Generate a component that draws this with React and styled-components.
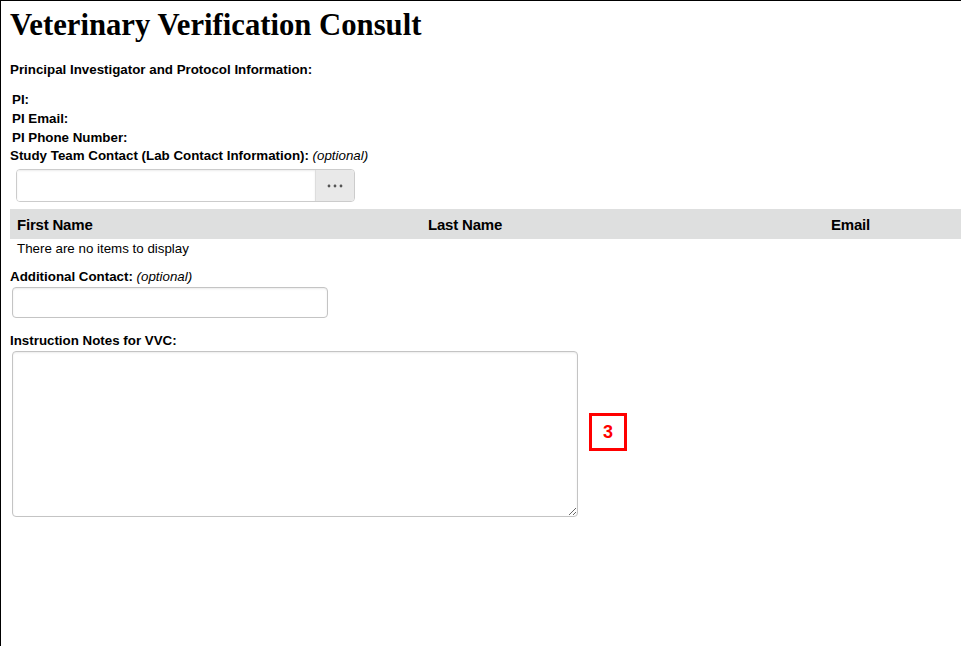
import React from "react";
import styled, { createGlobalStyle } from "styled-components";

const Global = createGlobalStyle`
  html, body {
    margin: 0;
    padding: 0;
    background: #fff;
    overflow: hidden;
  }
  body {
    font-family: "Liberation Sans", Arial, sans-serif;
    color: #000;
  }
`;

const Frame = styled.div`
  border-top: 1px solid #000;
  border-left: 1px solid #000;
  width: 1000px;
  height: 700px;
  padding-left: 9px;
  box-sizing: border-box;
`;

const Title = styled.h1`
  font-family: "Liberation Serif", "Times New Roman", serif;
  font-size: 30.7px;
  font-weight: bold;
  margin: 7px 0 0 0;
  line-height: 34px;
`;

const SectionLabel = styled.div`
  font-size: 13.33px;
  font-weight: bold;
  line-height: 15px;
  margin-top: ${(p) => p.$top || 0}px;
`;

const Optional = styled.span`
  font-weight: normal;
  font-style: italic;
`;

const InfoList = styled.div`
  display: flex;
  flex-direction: column;
  padding-left: 2px;
  margin-top: 15px;
  gap: 4px;
`;

const InfoRow = styled.div`
  font-size: 13.33px;
  font-weight: bold;
  line-height: 15px;
`;

const Lookup = styled.div`
  display: flex;
  width: 339px;
  height: 33px;
  margin: 6px 0 0 6px;
  border: 1px solid #ccc;
  border-radius: 4px;
  box-sizing: border-box;
  overflow: hidden;
`;

const LookupInput = styled.input`
  flex: 1;
  border: none;
  outline: none;
  box-shadow: inset 0 1px 2px rgba(0, 0, 0, 0.08);
`;

const LookupButton = styled.button`
  width: 39px;
  border: none;
  border-left: 1px solid #ddd;
  background: #e9e9e9;
  display: flex;
  align-items: center;
  justify-content: center;
  padding: 0;
`;

const Table = styled.div`
  margin-top: 7px;
`;

const HeaderRow = styled.div`
  display: grid;
  grid-template-columns: 411px 403px 1fr;
  background: #dedfdf;
  height: 30px;
  align-items: center;
  padding-left: 7px;
`;

const HeaderCell = styled.div`
  font-size: 15px;
  font-weight: bold;
  letter-spacing: -0.2px;
`;

const EmptyRow = styled.div`
  font-size: 13.33px;
  padding: 2px 0 0 7px;
  line-height: 15px;
`;

const TextInput = styled.input`
  display: block;
  width: 316px;
  height: 31px;
  margin: 3px 0 0 2px;
  border: 1px solid #c4c4c4;
  border-radius: 4px;
  box-sizing: border-box;
  box-shadow: inset 0 1px 2px rgba(0, 0, 0, 0.08);
  outline: none;
`;

const NotesRow = styled.div`
  display: flex;
  align-items: center;
  gap: 11px;
  margin-top: 3px;
`;

const Notes = styled.textarea`
  display: block;
  width: 566px;
  height: 166px;
  margin-left: 2px;
  border: 1px solid #c4c4c4;
  border-radius: 4px;
  box-sizing: border-box;
  box-shadow: inset 0 1px 2px rgba(0, 0, 0, 0.08);
  outline: none;
  resize: both;
`;

const Badge = styled.div`
  width: 38px;
  height: 38px;
  box-sizing: border-box;
  border: 3px solid #ff0000;
  color: #ff0000;
  font-size: 18px;
  font-weight: bold;
  display: flex;
  align-items: center;
  justify-content: center;
  margin-bottom: 4px;
`;

const Dots = () => (
  <svg width="16" height="4" viewBox="0 0 16 4">
    <circle cx="2" cy="2" r="1.4" fill="#555" />
    <circle cx="8" cy="2" r="1.4" fill="#555" />
    <circle cx="14" cy="2" r="1.4" fill="#555" />
  </svg>
);

export default function App() {
  return (
    <>
      <Global />
      <Frame>
        <Title>Veterinary Verification Consult</Title>
        <SectionLabel $top={20}>Principal Investigator and Protocol Information:</SectionLabel>
        <InfoList>
          <InfoRow>PI:</InfoRow>
          <InfoRow>PI Email:</InfoRow>
          <InfoRow>PI Phone Number:</InfoRow>
        </InfoList>
        <SectionLabel $top={3}>
          Study Team Contact (Lab Contact Information): <Optional>(optional)</Optional>
        </SectionLabel>
        <Lookup>
          <LookupInput />
          <LookupButton>
            <Dots />
          </LookupButton>
        </Lookup>
        <Table>
          <HeaderRow>
            <HeaderCell>First Name</HeaderCell>
            <HeaderCell>Last Name</HeaderCell>
            <HeaderCell>Email</HeaderCell>
          </HeaderRow>
          <EmptyRow>There are no items to display</EmptyRow>
        </Table>
        <SectionLabel $top={13}>
          Additional Contact: <Optional>(optional)</Optional>
        </SectionLabel>
        <TextInput />
        <SectionLabel $top={15}>Instruction Notes for VVC:</SectionLabel>
        <NotesRow>
          <Notes />
          <Badge>3</Badge>
        </NotesRow>
      </Frame>
    </>
  );
}
